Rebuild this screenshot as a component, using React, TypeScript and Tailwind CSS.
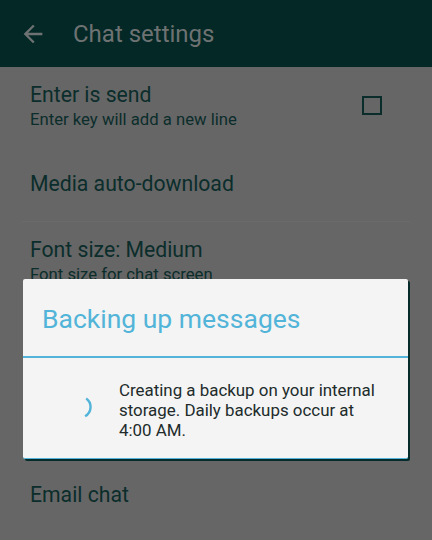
import React from "react";

const font = { fontFamily: "Roboto, 'Noto Sans', sans-serif" };

function Divider() {
  return <div className="mx-[22px] h-px bg-[#6b6b6b]" />;
}

function TwoLine({ title, sub, checkbox }: { title: string; sub: string; checkbox?: boolean }) {
  return (
    <div className="flex h-[80px] items-start pl-[30px] pr-[50px] pt-[16px]">
      <div className="flex-1">
        <div className="text-[21.2px] leading-[24px] text-[#0b2d2b]">{title}</div>
        <div className="mt-[3px] text-[16.7px] leading-[20px] text-[#0b2d2b]">{sub}</div>
      </div>
      {checkbox && <div className="mt-[13px] h-[19px] w-[20px] border-2 border-[#0a2d2b]" />}
    </div>
  );
}

function OneLine({ title, h = 74 }: { title: string; h?: number }) {
  return (
    <div className="flex items-center pl-[30px]" style={{ height: h }}>
      <div className="text-[21.2px] leading-[24px] text-[#0b2d2b]">{title}</div>
    </div>
  );
}

export default function App() {
  return (
    <div className="relative h-[540px] w-[432px] overflow-hidden bg-[#666666]" style={font}>
      <div className="flex h-[67px] items-center bg-[#032826] pl-[19px]">
        <svg width="28" height="28" viewBox="0 0 24 24" fill="#6e7272">
          <path d="M20 11H7.83l5.59-5.59L12 4l-8 8 8 8 1.41-1.41L7.83 13H20v-2z" />
        </svg>
        <div className="ml-[26px] text-[24px] leading-[28px] text-[#6e7272]">Chat settings</div>
      </div>
      <TwoLine title="Enter is send" sub="Enter key will add a new line" checkbox />
      <OneLine title="Media auto-download" />
      <Divider />
      <TwoLine title="Font size: Medium" sub="Font size for chat screen" />
      <div className="h-[156px]" />
      <OneLine title="Email chat" />

      <div className="absolute left-[23px] top-[279px] h-[180px] w-[385px] rounded-[2px] border-b border-[#52b4d8] bg-[#f4f4f4] shadow-[2px_2px_0_0_#052b2a]">
        <div className="flex h-[77px] items-center pl-[19px]">
          <div className="pt-[2px] text-[26.5px] leading-[30px] text-[#52b4d8]">Backing up messages</div>
        </div>
        <div className="h-[2px] bg-[#52b4d8]" />
        <div className="flex items-start pl-[45px] pr-[22px] pt-[22px]">
          <svg width="24" height="24" viewBox="0 0 24 24" className="mt-[15px] shrink-0" fill="none">
            <path
              d="M 18.2 3.5 A 10.5 10.5 0 0 1 17.1 21.2"
              stroke="#52b4d8"
              strokeWidth="2.4"
              strokeLinecap="butt"
            />
          </svg>
          <div className="ml-[27px] text-[16.9px] leading-[20px] text-[#212b2b]">
            Creating a backup on your internal storage. Daily backups occur at 4:00 AM.
          </div>
        </div>
      </div>
    </div>
  );
}
